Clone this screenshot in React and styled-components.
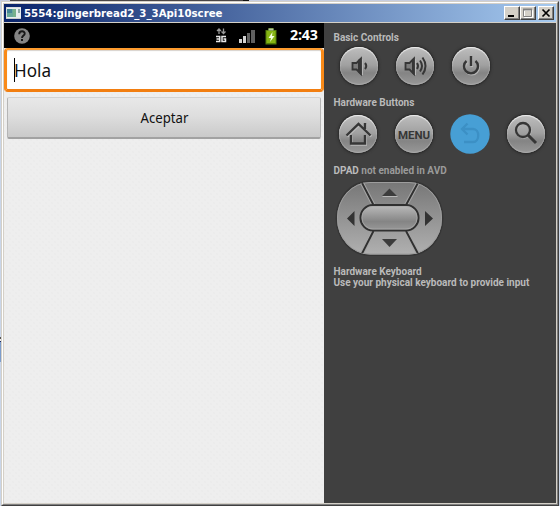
import React from "react";
import styled, { createGlobalStyle, css } from "styled-components";

const GlobalStyle = createGlobalStyle`
  * { box-sizing: border-box; }
  html, body { margin: 0; height: 509px; overflow: hidden; background: #fff; }
`;

const Desktop = styled.div`
  width: 560px;
  height: 509px;
  padding: 1px 1px 2px;
  background:
    linear-gradient(90deg, #c9cddf 0 10px, #4a4647 10px 243px, #111 243px 249px, #c6cde0 249px) 0 0 / 560px 1px no-repeat,
    linear-gradient(#555 0 2px, #eee 2px 4px, #17245b 4px 5px, #7d9dcc 5px 25px) 0 337px / 1px 25px no-repeat,
    linear-gradient(#c9d5e8, #c9d5e8) 0 0 / 560px 506px no-repeat,
    #fff;
`;

const WindowFrame = styled.div`
  width: 558px;
  height: 505px;
  border-style: solid;
  border-width: 1px;
  border-color: #d4d0c8 #404040 #404040 #d4d0c8;
`;

const WindowInner = styled.div`
  height: 503px;
  border-style: solid;
  border-width: 1px;
  border-color: #fff #808080 #808080 #fff;
`;

const WindowBody = styled.div`
  height: 501px;
  border: 1px solid #d4d0c8;
`;

const TitleBar = styled.header`
  display: flex;
  align-items: center;
  height: 19px;
  padding: 0 2px;
  border-bottom: 1px solid #d4d0c8;
  background: linear-gradient(90deg, #0a246a, #a6caf0);
`;

const Title = styled.h1`
  flex: 1;
  margin: 0 0 0 3px;
  padding-top: 1px;
  color: #fff;
  font: bold 11px/18px "DejaVu Sans", sans-serif;
  white-space: nowrap;
`;

const Condensed = styled.span`
  display: inline-block;
  transform: scaleX(${(p) => p.$ratio});
  transform-origin: ${(p) => p.$origin || "left"} center;
`;

const CaptionButton = styled.button`
  display: flex;
  width: 16px;
  height: 14px;
  padding: 0;
  margin-left: ${(p) => p.$gap || 0}px;
  border-style: solid;
  border-width: 1px;
  border-color: #fff #404040 #404040 #fff;
  box-shadow: inset -1px -1px #808080;
  background: #d4d0c8;
`;

const Content = styled.main`
  display: flex;
  height: 480px;
`;

const Phone = styled.section`
  width: 320px;
  background-color: #eee;
  background-image: radial-gradient(circle, #ebebeb 0.7px, transparent 1px),
    radial-gradient(circle, #ebebeb 0.7px, transparent 1px);
  background-size: 6px 6px;
  background-position: 0 0, 3px 3px;
`;

const StatusBar = styled.div`
  display: flex;
  align-items: center;
  height: 25px;
  padding: 0 6px 0 10px;
  background: #000;
`;

const StatusIcons = styled.svg`
  margin-left: auto;
`;

const Clock = styled.time`
  width: 28px;
  margin: 0 0 1px 12px;
  color: #fff;
  font: bold 14.2px/24px "Open Sans", sans-serif;
  letter-spacing: -0.2px;
  white-space: nowrap;
`;

const TextField = styled.div`
  display: flex;
  align-items: center;
  height: 44px;
  padding: 1px 7px 0;
  border: 3px solid #f98a18;
  border-top: 2px solid #ff9c2e;
  border-bottom-color: #f27e10;
  border-radius: 4px;
  background: #fff;
  box-shadow: inset 0 1px 1px #d8d2cc;
`;

const Caret = styled.span`
  width: 1px;
  height: 24px;
  background: #000;
`;

const FieldText = styled.span`
  margin-left: -1px;
  color: #111;
  font: 18px/24px "Noto Sans", sans-serif;
`;

const AcceptButton = styled.button`
  display: block;
  width: 314px;
  height: 42px;
  margin: 5px 0 0 3px;
  padding: 0;
  border: 1px solid #b5b5b5;
  border-top-color: #d2d2d2;
  border-bottom: 2px solid #a2a2a2;
  border-radius: 2px;
  background: linear-gradient(#e8e8e8, #dedede 45%, #cacaca);
  color: #111;
  font: 14px/38px "Noto Sans", sans-serif;
`;

const Controls = styled.aside`
  width: 232px;
  padding: 7px 0 0 9.5px;
  background: #404040;
`;

const Label = styled.h2`
  height: 15px;
  margin: 0;
  color: #bababa;
  font: bold 10px/15px Roboto, sans-serif;
  white-space: nowrap;
`;

const Dim = styled.span`
  color: #9a9a9a;
`;

const ButtonRow = styled.div`
  display: flex;
  gap: 18px;
  height: 38px;
  margin: ${(p) => p.$margin};
`;

const RoundButton = styled.button`
  flex: none;
  width: 38px;
  height: 38px;
  padding: 0;
  border: 0;
  border-radius: 50%;
  background: linear-gradient(#bebebe, #a0a0a0 48%, #848484 68%, #989898);
  box-shadow: 0 0 0 1px #303030, 0 0 3px 1px #292929, inset 0 1px 1px #f0f0f0, inset 0 -1px 1px #aaa;
  color: #363636;
  font: bold 11.5px/40px Roboto, sans-serif;
  ${(p) =>
    p.$active &&
    css`
      background: #479fd5;
      box-shadow: 0 0 0 0.7px #479fd5;
      color: #3c90c5;
    `}
`;

const Glyph = styled.svg`
  display: block;
  overflow: visible;
`;

const Dpad = styled.svg`
  display: block;
  margin: 2px 0 0 1.5px;
`;

const KeyboardInfo = styled.div`
  margin-top: 8px;
`;

const InfoLine = styled.p`
  margin: 0;
  color: #bababa;
  font: bold 10px/11px Roboto, sans-serif;
  white-space: nowrap;
`;

function WindowIcon() {
  return (
    <svg width="15" height="12" viewBox="0 0 15 12">
      <path d="M0 0h15v12H0z" fill="#e8eeee" />
      <path d="M1 2h9v8H1z" fill="#6aa89a" />
      <path d="M1 2h5v4H1z" fill="#478796" />
      <path d="M7 2h3v8H7z" fill="#78b18b" />
      <path d="M12 2h2v4h-2z" fill="#8ea9a5" />
      <path d="M0 0h15M0 0v12M0 11.5h15" stroke="#ccc" fill="none" />
    </svg>
  );
}

function VolumeIcon({ loud }) {
  return (
    <Glyph width="38" height="38" fill="none" stroke="currentColor">
      {loud ? (
        <g transform="translate(-3 0)">
          <path d="M22.500 12v16" stroke="#b7b7b7" />
          <path d="M12.500 16h4l4.500-4.500v15.500L16.500 22.500h-4z" strokeWidth="1.800" fill="#7b7b7b" />
          <path d="M19 13l2-2v17l-2-2z" fill="currentColor" stroke="none" />
          <path d="M24 16q2 3 0 6M27 13.500q4 5.500 0 11M29.500 10.500q6 8.500 0 17" strokeWidth="2" />
        </g>
      ) : (
        <g>
          <path d="M22.500 12v16" stroke="#b7b7b7" />
          <path d="M12.500 16h4l4.500-4.500v15.500L16.500 22.500h-4z" strokeWidth="1.800" fill="#7b7b7b" />
          <path d="M18 13l3-2v17l-3-3z" fill="currentColor" stroke="none" />
          <path d="M25 16q2.500 3 0 6" strokeWidth="2" />
        </g>
      )}
    </Glyph>
  );
}

function PowerIcon() {
  return (
    <Glyph width="38" height="38" fill="none" strokeWidth="2.400">
      <path d="M14.500 14a7 7 0 1 0 9 0M19 9v10" stroke="#b7b7b7" transform="translate(.8 1)" />
      <path d="M14.500 14a7 7 0 1 0 9 0M19 9v10" stroke="currentColor" />
    </Glyph>
  );
}

function HomeIcon() {
  return (
    <Glyph width="38" height="38" fill="none" strokeWidth="2.400">
      <path d="M7.500 20.500L19.500 9l12 11.500M12 19v9.500h14V19M26 14V8" stroke="#bbb" transform="translate(.8 1)" />
      <path d="M7.500 20.500L19.500 9l12 11.500M12 20v8.500h14V20M26 14V8" stroke="currentColor" />
    </Glyph>
  );
}

function BackIcon() {
  return (
    <Glyph width="38" height="38" fill="none" stroke="currentColor" strokeWidth="2.300">
      <path d="M16.500 8.500L11 14l5.500 5.500M11 14h11c7 0 7 13 0 13h-9" />
    </Glyph>
  );
}

function SearchIcon() {
  return (
    <Glyph width="38" height="38" fill="none">
      <circle cx="16.700" cy="15.700" r="7" stroke="#b8b8b8" strokeWidth="2" />
      <circle cx="16" cy="15" r="7" stroke="currentColor" strokeWidth="2.300" />
      <path d="M21 20l8 8" stroke="currentColor" strokeWidth="3" />
    </Glyph>
  );
}

function DirectionPad() {
  return (
    <Dpad width="110" height="78" viewBox="0 0 110 78">
      <defs>
        <linearGradient id="pad" x2="0" y2="1">
          <stop stopColor="#777" />
          <stop offset="1" stopColor="#b0b0b0" />
        </linearGradient>
        <linearGradient id="select" x2="0" y2="1">
          <stop stopColor="#bcbcbc" />
          <stop offset=".65" stopColor="#858585" />
          <stop offset="1" stopColor="#999" />
        </linearGradient>
        <clipPath id="padShape">
          <rect x="2" y="2" width="105" height="72.500" rx="33" ry="36" />
        </clipPath>
      </defs>
      <rect x="0.500" y="0.500" width="108" height="75.500" rx="34" ry="37.500" fill="#353535" />
      <rect x="2" y="2" width="105" height="72.500" rx="33" ry="36" fill="url(#pad)" />
      <rect x="2.500" y="2.500" width="104" height="71.500" rx="32.500" ry="35.500" fill="none" stroke="#9d9d9d" />
      <g clipPath="url(#padShape)">
        <path d="M26 1L38.500 25M84 1L71 25M26 75.500L38.500 51M84 75.500L71 51" stroke="#a4a4a4" strokeWidth="4" />
        <path d="M26 1L38.500 25M84 1L71 25M26 75.500L38.500 51M84 75.500L71 51" stroke="#303030" strokeWidth="1.900" />
      </g>
      <rect x="25.500" y="25" width="58" height="25.500" rx="12.500" fill="url(#select)" stroke="#303030" strokeWidth="2" />
      <rect x="27" y="26.500" width="55" height="22.500" rx="11" fill="none" stroke="#aaa" strokeWidth=".8" />
      <path d="M47.500 16.500h15" stroke="#b8b8b8" />
      <path d="M47 16l7.500-7.500L62 16zM47 59h15l-7.500 8z" fill="#3c3c3c" />
      <path d="M19.500 31v15l-7.500-7.500zM90 31l8 7.500-8 7.500z" fill="#333" />
    </Dpad>
  );
}

export default function App() {
  return (
    <Desktop>
      <GlobalStyle />
      <WindowFrame>
        <WindowInner>
          <WindowBody>
            <TitleBar>
              <WindowIcon />
              <Title><Condensed $ratio={0.927}>5554:gingerbread2_3_3Api10scree</Condensed></Title>
              <CaptionButton aria-label="Minimize">
                <svg width="14" height="12"><path d="M3 8h6v2H3z" /></svg>
              </CaptionButton>
              <CaptionButton aria-label="Maximize">
                <svg width="14" height="12" fill="none">
                  <path d="M3.500 3.500h8v7h-8z" stroke="#fff" />
                  <path d="M2.500 2.500h8v7h-8z" stroke="#808080" />
                  <path d="M2 2.500h9" stroke="#808080" strokeWidth="2" />
                </svg>
              </CaptionButton>
              <CaptionButton aria-label="Close" $gap={2}>
                <svg width="14" height="12" stroke="#000" strokeWidth="1.700"><path d="M3.500 2.500l7 7M10.500 2.500l-7 7" /></svg>
              </CaptionButton>
            </TitleBar>
            <Content>
              <Phone>
                <StatusBar>
                  <svg width="16" height="16">
                    <circle cx="8" cy="8" r="7.800" fill="#858585" />
                    <path d="M5.200 6.200c0-4 6-3.600 5.500-.4C10.400 7.600 8 7.500 8 10" fill="none" stroke="#161616" strokeWidth="1.900" />
                    <path d="M7 11h2v2H7z" fill="#161616" />
                  </svg>
                  <StatusIcons width="64" height="20">
                    <path d="M5 8V3M3 5l2-2 2 2M9.500 2.500v5M7.500 5.500l2 2 2-2" fill="none" stroke="#999" strokeWidth="1.300" />
                    <path d="M2 10.500h3.700v5H2M2.500 13H5M12 10.500H8v5h3.500V13H9.500" fill="none" stroke="#e7e7e7" strokeWidth="1.500" />
                    <path d="M25 13h3v4h-3zM29 10h3v7h-3z" fill="#d4d4d4" />
                    <path d="M33 7h3v10h-3zM37 4h4v13h-4z" fill="#606060" />
                    <path d="M54.500 2h5v2h3v14.500h-11V4h3z" fill="#527f09" />
                    <path d="M52.500 5h9v12h-9z" fill="#86b514" />
                    <path d="M54.500 2.500h5v2h-5z" fill="#b8c8a2" />
                    <path d="M58.500 6l-4 6h2.500l-1 4 4.500-6H58z" fill="#f4ffe0" />
                  </StatusIcons>
                  <Clock>2:43</Clock>
                </StatusBar>
                <TextField><Caret /><FieldText><Condensed $ratio={0.95}>Hola</Condensed></FieldText></TextField>
                <AcceptButton><Condensed $ratio={0.94} $origin="center">Aceptar</Condensed></AcceptButton>
              </Phone>
              <Controls>
                <Label>Basic Controls</Label>
                <ButtonRow $margin="2px 0 10px 6.5px">
                  <RoundButton aria-label="Volume down"><VolumeIcon /></RoundButton>
                  <RoundButton aria-label="Volume up"><VolumeIcon loud /></RoundButton>
                  <RoundButton aria-label="Power"><PowerIcon /></RoundButton>
                </ButtonRow>
                <Label>Hardware Buttons</Label>
                <ButtonRow $margin="5px 0 10px 5.5px">
                  <RoundButton aria-label="Home"><HomeIcon /></RoundButton>
                  <RoundButton>MENU</RoundButton>
                  <RoundButton $active aria-label="Back"><BackIcon /></RoundButton>
                  <RoundButton aria-label="Search"><SearchIcon /></RoundButton>
                </ButtonRow>
                <Label>DPAD <Dim>not enabled in AVD</Dim></Label>
                <DirectionPad />
                <KeyboardInfo>
                  <InfoLine>Hardware Keyboard</InfoLine>
                  <InfoLine>Use your physical keyboard to provide input</InfoLine>
                </KeyboardInfo>
              </Controls>
            </Content>
          </WindowBody>
        </WindowInner>
      </WindowFrame>
    </Desktop>
  );
}
